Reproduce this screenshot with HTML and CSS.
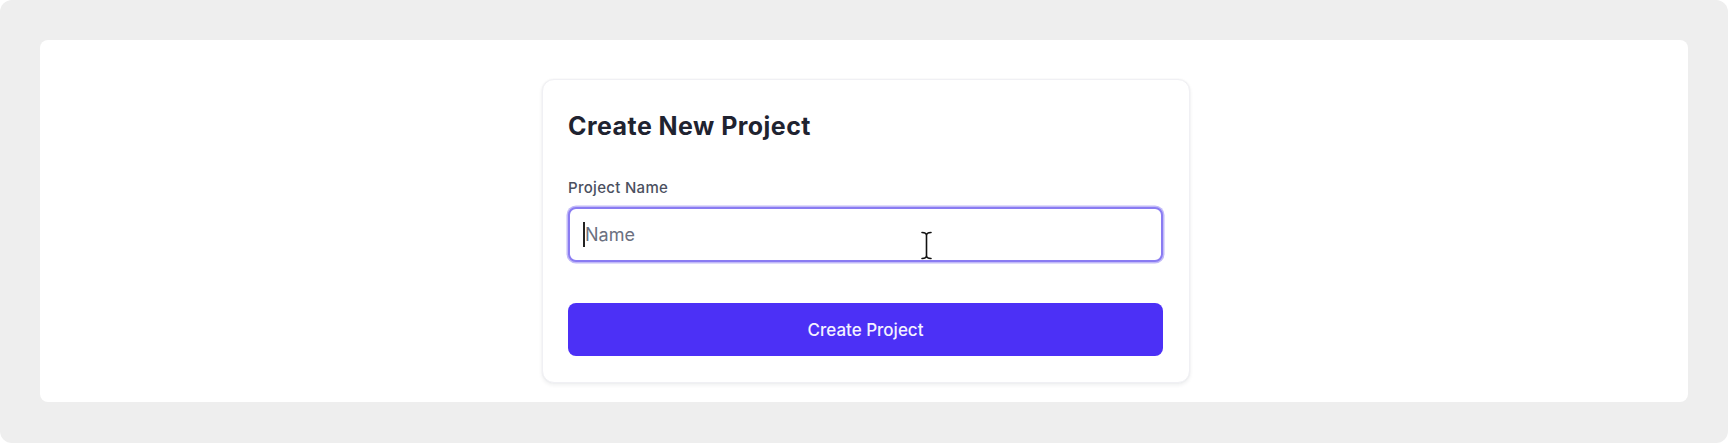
FILE: index.html
```html
<!DOCTYPE html>
<html lang="en">
<head>
<meta charset="utf-8">
<title>Create New Project</title>
<link rel="stylesheet" href="styles.css">
</head>
<body>
<div class="frame">
  <div class="panel">
    <form class="card">
      <h1 class="title">Create New Project</h1>
      <label class="label" for="pname">Project Name</label>
      <div class="field">
        <input id="pname" class="input" type="text" placeholder="Name">
        <span class="caret"></span>
        <svg class="ibeam" width="13" height="29" viewBox="0 0 13 29" aria-hidden="true">
          <path d="M2 1.5 C4.5 1.5 6.5 2.5 6.5 4.5 C6.5 2.5 8.5 1.5 11 1.5 M6.5 4.5 L6.5 24.5 M2 27.5 C4.5 27.5 6.5 26.5 6.5 24.5 C6.5 26.5 8.5 27.5 11 27.5" fill="none" stroke="#fff" stroke-width="3.4" stroke-linecap="round"/>
          <path d="M2 1.5 C4.5 1.5 6.5 2.5 6.5 4.5 C6.5 2.5 8.5 1.5 11 1.5 M6.5 4.5 L6.5 24.5 M2 27.5 C4.5 27.5 6.5 26.5 6.5 24.5 C6.5 26.5 8.5 27.5 11 27.5" fill="none" stroke="#111" stroke-width="1.6" stroke-linecap="round"/>
        </svg>
      </div>
      <button class="button" type="button">Create Project</button>
    </form>
  </div>
</div>
</body>
</html>
```
FILE: styles.css
```css
* { box-sizing: border-box; }
html, body {
  margin: 0;
  background: #ffffff;
  font-family: Inter, "Noto Sans", "Liberation Sans", sans-serif;
}
.frame {
  height: 443px;
  background: #eeeeee;
  border-radius: 12px;
  padding: 40px;
}
.panel {
  height: 362px;
  background: #ffffff;
  border-radius: 8px;
  display: flex;
  justify-content: center;
  padding-top: 39px;
  padding-left: 4px;
}
.card {
  width: 648px;
  height: 304px;
  background: #ffffff;
  border: 1px solid #f0f0f4;
  border-radius: 12px;
  box-shadow: 0 2px 4px rgba(17, 24, 39, 0.07), 0 0 2px rgba(17, 24, 39, 0.05);
  padding: 30px 26px 24px 25px;
  display: flex;
  flex-direction: column;
}
.title {
  margin: 0 0 36px 0;
  font-size: 25px;
  line-height: 32px;
  font-weight: 700;
  color: #1f2330;
  letter-spacing: 0.45px;
}
.label {
  display: block;
  font-size: 15px;
  line-height: 20px;
  font-weight: 500;
  color: #4b5060;
  letter-spacing: 0.3px;
}
.field {
  position: relative;
  margin-top: 9px;
}
.input {
  display: block;
  width: 100%;
  height: 55px;
  margin: 0;
  border: 2px solid #8a7cf2;
  box-shadow: 0 0 0 1.5px #c2baf8;
  border-radius: 8px;
  padding: 0 14px 0 15px;
  font-family: inherit;
  font-size: 18px;
  color: #1f2330;
  background: #ffffff;
  outline: none;
}
.input::placeholder { color: #6b7080; }
.caret {
  position: absolute;
  left: 15px;
  top: 15px;
  width: 2px;
  height: 25px;
  background: #222;
}
.ibeam {
  position: absolute;
  left: 352px;
  top: 24px;
}
.button {
  margin-top: 41px;
  height: 53px;
  width: 100%;
  border: 0;
  border-radius: 8px;
  background: #4c30f6;
  color: #f3f1ff;
  font-family: inherit;
  font-size: 17px;
  font-weight: 500;
}
```
